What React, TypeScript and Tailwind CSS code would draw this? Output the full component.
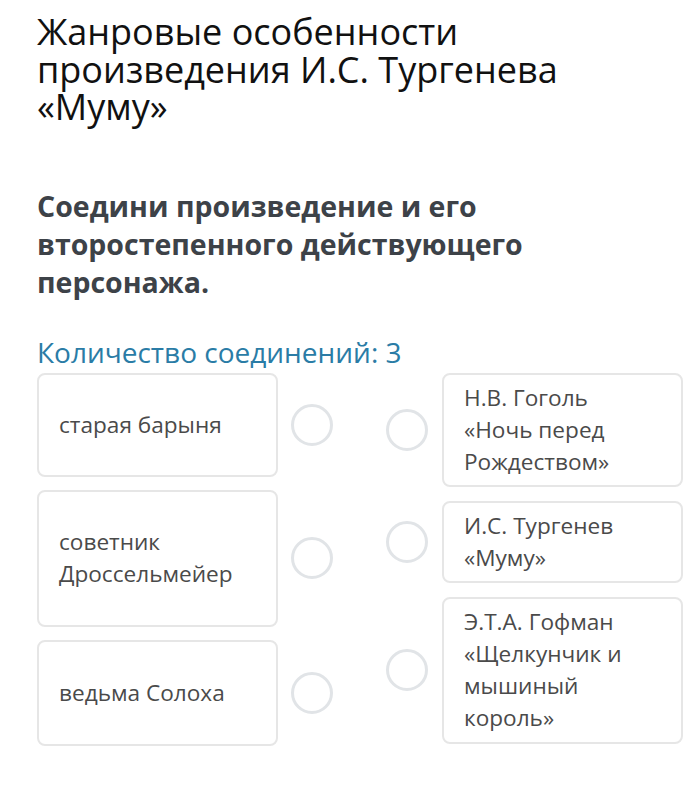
import React from 'react'

const font = { fontFamily: '"Open Sans", "Noto Sans", sans-serif' }

function Circle() {
  return <div className="h-[42px] w-[42px] shrink-0 rounded-full border-[3px] border-[#e1e4e7] bg-white" />
}

const left = [
  { text: 'старая барыня', h: 'h-[104px]' },
  { text: 'советник\nДроссельмейер', h: 'h-[137px]' },
  { text: 'ведьма Солоха', h: 'h-[106px]' },
]

const right = [
  { text: 'Н.В. Гоголь\n«Ночь перед\nРождеством»', h: 'h-[114px]' },
  { text: 'И.С. Тургенев\n«Муму»', h: 'h-[82px]' },
  { text: 'Э.Т.А. Гофман\n«Щелкунчик и\nмышиный\nкороль»', h: 'h-[147px]' },
]

export default function App() {
  return (
    <div className="min-h-[798px] w-[699px] bg-white pl-[37px]" style={font}>
      <h1 className="pt-[13px] text-[36px] leading-[37.5px] font-normal text-[#111111]">
        Жанровые особенности
        <br />
        произведения И.С. Тургенева
        <br />
        «Муму»
      </h1>

      <p className="mt-[61px] text-[28.5px] leading-[38px] font-bold text-[#3d4248]">
        Соедини произведение и его
        <br />
        второстепенного действующего
        <br />
        персонажа.
      </p>

      <p className="mt-[33px] text-[28px] leading-[36px] text-[#2a7ca6]">Количество соединений: 3</p>

      <div className="mt-[3px] flex">
        <div className="flex flex-col gap-[13px]">
          {left.map((item) => (
            <div key={item.text} className="flex items-center">
              <div
                className={`flex ${item.h} w-[241px] items-center whitespace-pre-line rounded-[8px] border-2 border-[#e6e6e6] px-[20px] text-[22.6px] leading-[32px] text-[#4a4a4a]`}
              >
                {item.text}
              </div>
              <div className="ml-[13px]">
                <Circle />
              </div>
            </div>
          ))}
        </div>

        <div className="ml-[53px] flex flex-col gap-[14px]">
          {right.map((item) => (
            <div key={item.text} className="flex items-center">
              <Circle />
              <div
                className={`ml-[14px] flex ${item.h} w-[241px] items-center whitespace-pre-line rounded-[8px] border-2 border-[#e6e6e6] px-[20px] text-[22.6px] leading-[32px] text-[#4a4a4a]`}
              >
                {item.text}
              </div>
            </div>
          ))}
        </div>
      </div>
    </div>
  )
}
